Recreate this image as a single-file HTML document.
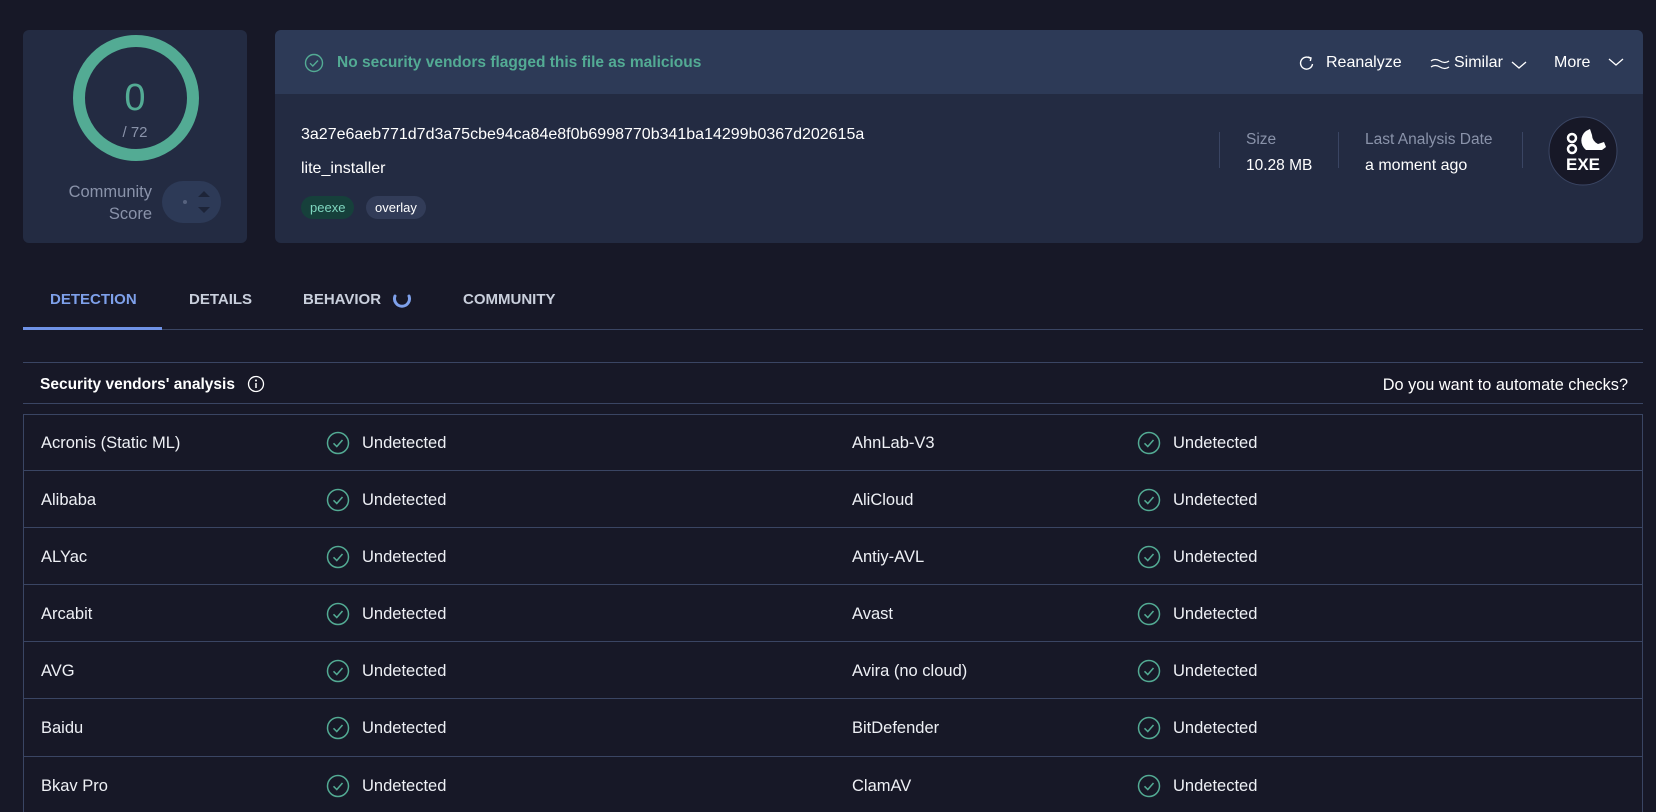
<!DOCTYPE html>
<html style="width:1656px;height:812px;overflow:hidden"><head><meta charset="utf-8"><style>
*{margin:0;padding:0;box-sizing:border-box}
body{width:1656px;height:812px;background:#171827;font-family:"Liberation Sans",sans-serif;color:#e8eaf0;position:relative;overflow:hidden}
.a{position:absolute;white-space:nowrap}
.card{position:absolute;left:23px;top:30px;width:224px;height:213px;background:#232b42;border-radius:6px}
.panel{position:absolute;left:275px;top:30px;width:1368px;height:213px;background:#232b42;border-radius:6px;overflow:hidden}
.band{position:absolute;left:0;top:0;width:100%;height:64px;background:#2d3a57}
.tag{position:absolute;top:196px;height:23px;border-radius:12px;font-size:13px;line-height:23px;padding:0 9px}
.vl{position:absolute;width:1px;background:#3a4563}
.hl{position:absolute;height:1px;background:#3a4563}
.tab{position:absolute;top:291px;font-size:15px;font-weight:bold;color:#c9cfdc}
.row{position:absolute;left:23px;width:1620px;height:57px;border-bottom:1px solid #3a4563}
.row span{position:absolute;top:20px;font-size:16.5px;color:#eef0f5}
.row svg{position:absolute;top:17px}
</style></head><body>

<div class="card">
  <svg class="a" style="left:49px;top:4px" width="128" height="128" viewBox="0 0 128 128"><circle cx="64" cy="64" r="57" fill="none" stroke="#53ab94" stroke-width="12"/></svg>
  <div class="a" style="left:0;width:224px;text-align:center;top:47px;font-size:38px;color:#53ab94">0</div>
  <div class="a" style="left:0;width:224px;text-align:center;top:94px;font-size:15px;color:#8a93aa">/ 72</div>
  <div class="a" style="right:95px;top:151px;font-size:16.5px;color:#8a93aa;text-align:right;line-height:22px">Community<br>Score</div>
  <div class="a" style="left:139px;top:151px;width:59px;height:42px;border-radius:21px;background:#2d3a57"></div>
  <div class="a" style="left:160px;top:170px;width:4px;height:4px;border-radius:2px;background:#56627e"></div>
  <svg class="a" style="left:174px;top:159px" width="14" height="26" viewBox="0 0 14 26"><path d="M1 8 L7 2 L13 8Z M1 18 L7 24 L13 18Z" fill="#1d2438"/></svg>
</div>

<div class="panel">
  <div class="band"></div>
  <svg class="a" style="left:29px;top:23px" width="20" height="20" viewBox="0 0 20 20"><circle cx="10" cy="10" r="8.5" fill="none" stroke="#53ab94" stroke-width="1.4"/><path d="M6 10.3 L8.8 13 L14 7.5" fill="none" stroke="#53ab94" stroke-width="1.4"/></svg>
  <div class="a" style="left:62px;top:24px;font-size:15.5px;font-weight:bold;color:#53ab94">No security vendors flagged this file as malicious</div>
  <svg class="a" style="left:1024px;top:25px" width="16" height="16" viewBox="0 0 16 16"><path d="M13.5 9 A6 6 0 1 1 11 3.2" fill="none" stroke="#fff" stroke-width="1.4"/><path d="M9 2 L12 3 L11.3 6" fill="none" stroke="#fff" stroke-width="1.4"/></svg>
  <div class="a" style="left:1051px;top:24px;font-size:16px;color:#fff">Reanalyze</div>
  <svg class="a" style="left:1155px;top:27px" width="20" height="14" viewBox="0 0 20 14"><path d="M1 4 Q5 1 10 4 T19 4 M1 10 Q5 7 10 10 T19 10" fill="none" stroke="#fff" stroke-width="1.3"/></svg>
  <div class="a" style="left:1179px;top:24px;font-size:16px;color:#fff">Similar</div>
  <svg class="a" style="left:1236px;top:30px" width="16" height="10" viewBox="0 0 16 10"><path d="M1 2 L8 8 L15 2" fill="none" stroke="#fff" stroke-width="1.3"/></svg>
  <div class="a" style="left:1279px;top:24px;font-size:16px;color:#fff">More</div>
  <svg class="a" style="left:1333px;top:27px" width="16" height="10" viewBox="0 0 16 10"><path d="M1 2 L8 8 L15 2" fill="none" stroke="#fff" stroke-width="1.3"/></svg>

  <div class="a" style="left:26px;top:96px;font-size:16px;color:#fff">3a27e6aeb771d7d3a75cbe94ca84e8f0b6998770b341ba14299b0367d202615a</div>
  <div class="a" style="left:26px;top:130px;font-size:16px;color:#fff">lite_installer</div>
  <div class="tag" style="left:26px;background:#16403b;color:#7fd6bf;top:166px">peexe</div>
  <div class="tag" style="left:91px;background:#323c58;color:#fff;top:166px">overlay</div>

  <div class="vl" style="left:944px;top:102px;height:36px"></div>
  <div class="a" style="left:971px;top:101px;font-size:15.5px;color:#8a93aa">Size</div>
  <div class="a" style="left:971px;top:127px;font-size:15.5px;color:#fff">10.28 MB</div>
  <div class="vl" style="left:1063px;top:102px;height:36px"></div>
  <div class="a" style="left:1090px;top:101px;font-size:15.5px;color:#8a93aa">Last Analysis Date</div>
  <div class="a" style="left:1090px;top:127px;font-size:16px;color:#fff">a moment ago</div>
  <div class="vl" style="left:1247px;top:102px;height:36px"></div>
  <svg class="a" style="left:1273px;top:86px" width="70" height="70" viewBox="0 0 70 70">
    <circle cx="35" cy="35" r="34" fill="#171827" stroke="#3a4563" stroke-width="1"/>
    <circle cx="24" cy="22" r="4" fill="none" stroke="#fff" stroke-width="2.5"/>
    <circle cx="24" cy="33" r="4" fill="none" stroke="#fff" stroke-width="2.5"/>
    <path d="M38 15 L42 13 L44 19 A10 10 0 0 0 50 28 L56 26 L58 31 L54 34 L38 34 A12 12 0 0 1 38 15Z" fill="#fff"/>
    <text x="35" y="54" text-anchor="middle" font-family="Liberation Sans" font-weight="bold" font-size="17" fill="#fff">EXE</text>
  </svg>
</div>

<div class="tab" style="left:50px;color:#7ea0ea">DETECTION</div>
<div class="tab" style="left:189px">DETAILS</div>
<div class="tab" style="left:303px">BEHAVIOR</div>
<svg class="a" style="left:392px;top:290px" width="20" height="20" viewBox="0 0 20 20"><path d="M3 6 A7.5 7.5 0 1 0 17 6" fill="none" stroke="#7ea0ea" stroke-width="3" stroke-linecap="round"/></svg>
<div class="tab" style="left:463px">COMMUNITY</div>
<div class="hl" style="left:23px;top:329px;width:1620px"></div>
<div class="a" style="left:23px;top:327px;width:139px;height:3px;background:#6f92e6"></div>

<div class="hl" style="left:23px;top:362px;width:1620px"></div>
<div class="a" style="left:40px;top:376px;font-size:15.5px;font-weight:bold;color:#fff">Security vendors' analysis</div>
<svg class="a" style="left:247px;top:375px" width="18" height="18" viewBox="0 0 18 18"><circle cx="9" cy="9" r="7.5" fill="none" stroke="#fff" stroke-width="1.3"/><path d="M9 8 V13" stroke="#fff" stroke-width="1.5"/><circle cx="9" cy="5.5" r="1" fill="#fff"/></svg>
<div class="a" style="right:28px;top:376px;font-size:16.3px;color:#fff">Do you want to automate checks?</div>
<div class="hl" style="left:23px;top:403px;width:1620px"></div>

<div class="a" style="left:23px;top:414px;width:1620px;height:398px;border:1px solid #3a4563;border-bottom:none"></div>

<div id="rows"></div>
<script>
var d=[["Acronis (Static ML)","AhnLab-V3"],["Alibaba","AliCloud"],["ALYac","Antiy-AVL"],["Arcabit","Avast"],["AVG","Avira (no cloud)"],["Baidu","BitDefender"],["Bkav Pro","ClamAV"]];
var ic='<svg width="24" height="24" viewBox="0 0 24 24"><circle cx="12" cy="12" r="10.5" fill="none" stroke="#53ab94" stroke-width="1.5"/><path d="M7.5 12.3 L10.8 15.5 L16.5 9" fill="none" stroke="#53ab94" stroke-width="1.5"/></svg>';
var h='';var tops=[414,471,528,585,642,699,757];
for(var i=0;i<d.length;i++){h+='<div class="row" style="top:'+tops[i]+'px;height:'+(i<6?tops[i+1]-tops[i]:55)+'px;'+(i==6?'border-bottom:none':'')+'"><span style="left:18px">'+d[i][0]+'</span><svg style="left:303px">'+ic.slice(4)+'<span style="left:339px">Undetected</span><span style="left:829px">'+d[i][1]+'</span><svg style="left:1114px">'+ic.slice(4)+'<span style="left:1150px">Undetected</span></div>';}
document.getElementById('rows').innerHTML=h;
</script>
</body></html>
